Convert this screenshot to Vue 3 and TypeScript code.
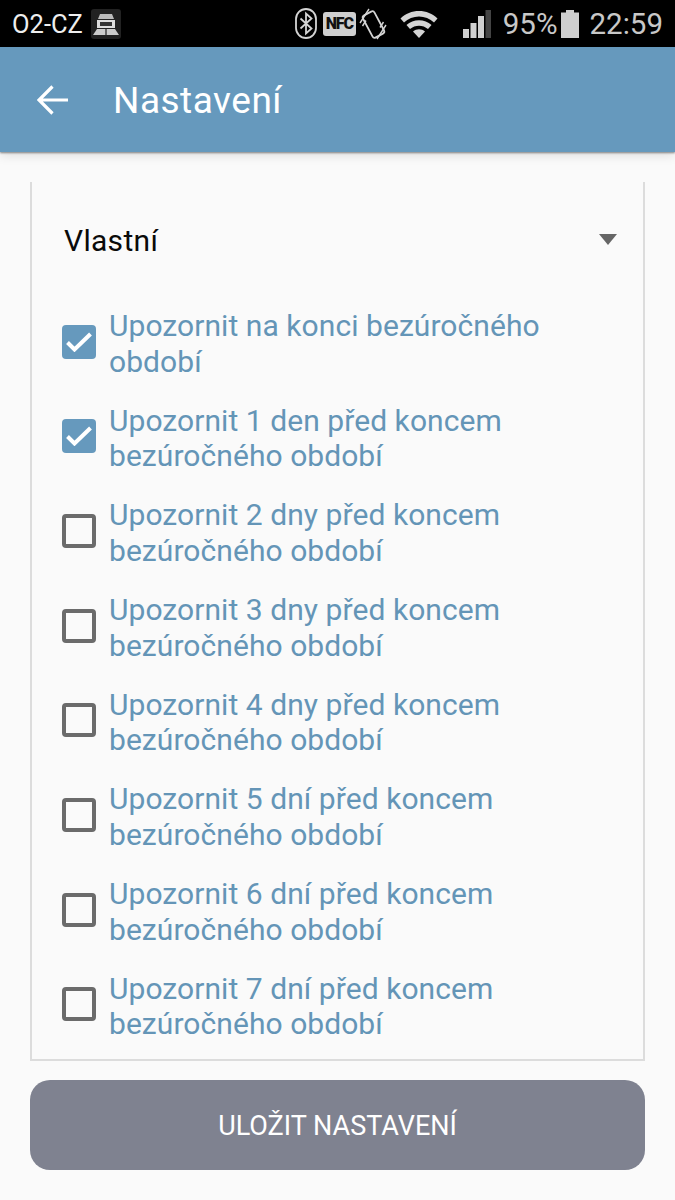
<script setup lang="ts">
interface Item { label: string; checked: boolean }
const items: Item[] = [
  { label: 'Upozornit na konci bezúročného období', checked: true },
  { label: 'Upozornit 1 den před koncem bezúročného období', checked: true },
  { label: 'Upozornit 2 dny před koncem bezúročného období', checked: false },
  { label: 'Upozornit 3 dny před koncem bezúročného období', checked: false },
  { label: 'Upozornit 4 dny před koncem bezúročného období', checked: false },
  { label: 'Upozornit 5 dní před koncem bezúročného období', checked: false },
  { label: 'Upozornit 6 dní před koncem bezúročného období', checked: false },
  { label: 'Upozornit 7 dní před koncem bezúročného období', checked: false },
]
</script>

<template>
  <div class="screen">
    <div class="status">
      <span class="carrier">O2-CZ</span>
      <span class="car">
        <svg width="30" height="30" viewBox="0 0 30 30">
          <rect width="30" height="30" rx="3" fill="#222" />
          <path d="M9 5h12l2 5H7z" fill="#bbb" />
          <path d="M6 11h18v8H6z" fill="#ddd" />
          <rect x="9" y="13" width="12" height="4" fill="#333" />
          <path d="M6 20h18l4 6H2z" fill="#ccc" />
          <path d="M15 20v6" stroke="#444" stroke-width="1.500" />
        </svg>
      </span>
      <span class="fill"></span>
      <svg class="ic-bt" width="22" height="31" viewBox="0 0 22 31" fill="none" stroke="#d4d4d4">
        <rect x="1" y="1" width="20" height="29" rx="10" stroke-width="1.800" />
        <path d="M5.500 10.500l11 10-5.500 5V5.500l5.500 5-11 10" stroke-width="1.800" />
      </svg>
      <span class="nfc">NFC</span>
      <svg class="ic-rot" width="28" height="32" viewBox="0 0 28 32" fill="none" stroke="#d4d4d4" stroke-width="1.800">
        <rect x="8" y="4" width="13" height="25" rx="2.500" transform="rotate(-28 14.500 16.500)" />
        <path d="M1 15L10 1M3.500 18L7 12.500M27 17L18 31M24.500 14L21 19.500" stroke-width="1.400" />
      </svg>
      <svg class="ic-wifi" width="38" height="28" viewBox="0 0 38 28">
        <path d="M0.500 8.500C10 -1.500 28 -1.500 37.500 8.500L34 12.500C26 4.500 12 4.500 4 12.500Z" fill="#d4d4d4" />
        <path d="M6.500 15C13 8.500 25 8.500 31.500 15L28 19C23 14.500 15 14.500 10 19Z" fill="#d4d4d4" />
        <path d="M13 21.500C16.500 18.500 21.500 18.500 25 21.500L19 28Z" fill="#d4d4d4" />
      </svg>
      <svg class="ic-signal" width="28" height="28" viewBox="0 0 28 28">
        <rect x="0" y="19" width="6" height="9" fill="#d0d0d0" />
        <rect x="7.500" y="13" width="6" height="15" fill="#d0d0d0" />
        <rect x="15" y="6" width="6" height="22" fill="#d0d0d0" />
        <rect x="22.500" y="0" width="5.500" height="28" fill="#444" />
      </svg>
      <span class="pct">95%</span>
      <svg class="ic-batt" width="18" height="28" viewBox="0 0 18 28">
        <path d="M5 0h8v2.500H18V28H0V2.500h5z" fill="#cfcfcf" />
      </svg>
      <span class="time">22:59</span>
    </div>

    <header class="appbar">
      <svg class="back" width="32" height="30" viewBox="0 0 32 30" fill="none" stroke="#fff" stroke-width="3.200">
        <path d="M1.500 15H31M15.500 1.500L2 15l13.500 13.500" />
      </svg>
      <h1 class="title">Nastavení</h1>
    </header>

    <main class="content">
      <section class="card">
        <div class="select">
          <span>Vlastní</span>
          <span class="caret"></span>
        </div>
        <ul class="list">
          <li v-for="item in items" :key="item.label" class="row">
            <span class="box" :class="{ on: item.checked }">
              <svg v-if="item.checked" width="26" height="20" viewBox="0 0 26 20" fill="none" stroke="#fff" stroke-width="4">
                <path d="M1.500 10.500l7 7L24.500 2" />
              </svg>
            </span>
            <span class="label">{{ item.label }}</span>
          </li>
        </ul>
      </section>
      <button class="save" type="button">ULOŽIT NASTAVENÍ</button>
    </main>
  </div>
</template>

<style>
html, body { margin: 0; background: #fafafa; }
</style>

<style scoped>
.screen {
  width: 675px;
  height: 1200px;
  background: #fafafa;
  font-family: Roboto, "Liberation Sans", sans-serif;
  overflow: hidden;
  display: flex;
  flex-direction: column;
}
.status {
  height: 47px;
  background: #000;
  display: flex;
  align-items: center;
  padding: 0 12px 0 12px;
  box-sizing: border-box;
  color: #d0d0d0;
  flex: none;
}
.carrier { color: #eee; font-size: 25.500px; }
.car { display: flex; margin-left: 8px; }
.fill { flex: 1; }
.nfc {
  margin-left: 6px;
  width: 33px;
  height: 24px;
  background: #cfcfcf;
  color: #111;
  border-radius: 3px;
  font-size: 16px;
  font-weight: 900;
  line-height: 24px;
  text-align: center;
  letter-spacing: -1.200px;
}
.ic-rot { margin-left: 3px; }
.ic-wifi { margin-left: 13px; }
.ic-signal { margin-left: 25px; }
.pct { margin-left: 12px; font-size: 29.500px; color: #c8c8c8; }
.ic-batt { margin-left: 3px; }
.time { margin-left: 11px; font-size: 29.500px; color: #c8c8c8; }

.appbar {
  height: 105px;
  flex: none;
  background: #6699bd;
  box-shadow: 0 1px 2px rgba(0,0,0,.45), 0 4px 10px rgba(0,0,0,.1);
  display: flex;
  align-items: center;
  padding-left: 37px;
  box-sizing: border-box;
  position: relative;
}
.title {
  margin: 2px 0 0 44px;
  font-size: 37px;
  font-weight: 400;
  color: #fff;
  letter-spacing: 0.500px;
}
.content {
  padding: 30px 30px 0;
  display: flex;
  flex-direction: column;
}
.card {
  height: 879px;
  box-sizing: border-box;
  border: 2px solid #dcdcdc;
  border-top: none;
}
.select {
  height: 116px;
  display: flex;
  justify-content: space-between;
  align-items: center;
  padding: 0 26px 0 32px;
  font-size: 30px;
  letter-spacing: 0.300px;
  color: #0a0a0a;
  box-sizing: border-box;
}
.caret {
  width: 0;
  height: 0;
  border-left: 9.500px solid transparent;
  border-right: 9.500px solid transparent;
  border-top: 11px solid #666;
  margin-top: -2px;
}
.list {
  list-style: none;
  margin: 0;
  padding: 10px 0 0 30px;
  display: flex;
  flex-direction: column;
  gap: 23.680px;
}
.row {
  display: flex;
  align-items: center;
  gap: 13px;
}
.box {
  width: 34px;
  height: 34px;
  flex: none;
  box-sizing: border-box;
  border: 4px solid #6b6b6b;
  border-radius: 4px;
  display: flex;
  align-items: center;
  justify-content: center;
  margin-bottom: 4px;
}
.box.on {
  background: #6699bd;
  border: none;
}
.label {
  font-size: 30px;
  letter-spacing: 0.060px;
  line-height: 35.500px;
  color: #6495b7;
  width: 480px;
}
.save {
  margin-top: 19px;
  height: 90px;
  border: none;
  border-radius: 20px;
  background: #7f8290;
  color: #fff;
  font-family: inherit;
  font-size: 27px;
  font-weight: 400;
  padding: 2px 0 0;
}
</style>
